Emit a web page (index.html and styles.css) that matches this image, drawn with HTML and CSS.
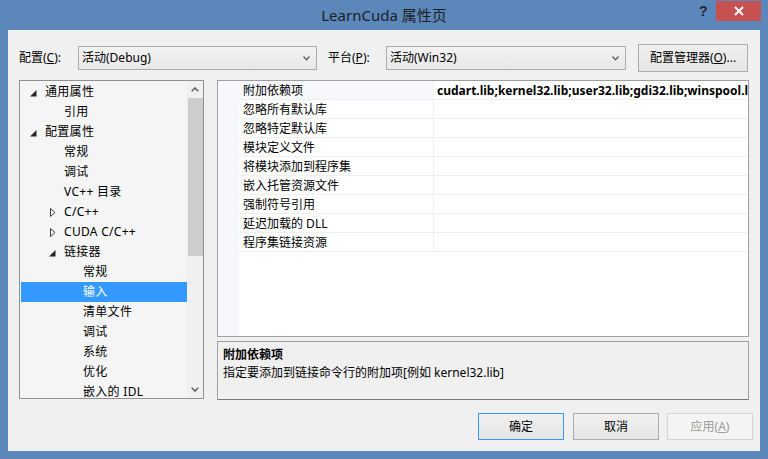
FILE: index.html
```html
<!DOCTYPE html>
<html lang="zh-CN">
<head>
<meta charset="utf-8">
<title>LearnCuda 属性页</title>
<link rel="stylesheet" href="styles.css">
</head>
<body>
<div class="window">
  <div class="titlebar">
    <div class="title">LearnCuda 属性页</div>
    <span class="help">?</span>
    <span class="close"><svg width="10" height="10" viewBox="0 0 10 10"><path d="M1 1 L9 9 M9 1 L1 9" stroke="#fff" stroke-width="2" fill="none"/></svg></span>
  </div>
  <div class="client">
    <div class="toolbar">
      <span class="lbl lbl-config">配置(<u>C</u>):</span>
      <div class="combo combo-config"><span class="combo-text">活动(Debug)</span><span class="combo-arrow"><svg width="7" height="5" viewBox="0 0 7 5"><path d="M0.5 0.5 L3.5 3.8 L6.5 0.5" fill="none" stroke="#606060" stroke-width="1.4"/></svg></span></div>
      <span class="lbl lbl-platform">平台(<u>P</u>):</span>
      <div class="combo combo-platform"><span class="combo-text">活动(Win32)</span><span class="combo-arrow"><svg width="7" height="5" viewBox="0 0 7 5"><path d="M0.5 0.5 L3.5 3.8 L6.5 0.5" fill="none" stroke="#606060" stroke-width="1.4"/></svg></span></div>
      <button class="btn btn-manager">配置管理器(<u>O</u>)...</button>
    </div>

    <div class="main">
      <div class="tree">
        <div class="tree-list">
          <div class="node l0"><span class="tog"><svg class="exp" width="7" height="7" viewBox="0 0 7 7"><path d="M6.5 0 L6.5 6.5 L0 6.5 Z" fill="#262626"/></svg></span><span class="txt">通用属性</span></div>
          <div class="node l1"><span class="tog"></span><span class="txt">引用</span></div>
          <div class="node l0"><span class="tog"><svg class="exp" width="7" height="7" viewBox="0 0 7 7"><path d="M6.5 0 L6.5 6.5 L0 6.5 Z" fill="#262626"/></svg></span><span class="txt">配置属性</span></div>
          <div class="node l1"><span class="tog"></span><span class="txt">常规</span></div>
          <div class="node l1"><span class="tog"></span><span class="txt">调试</span></div>
          <div class="node l1"><span class="tog"></span><span class="txt">VC++ 目录</span></div>
          <div class="node l1"><span class="tog"><svg class="col" width="6" height="9" viewBox="0 0 6 9"><path d="M0.5 0.5 L5 4.5 L0.5 8.5 Z" fill="none" stroke="#404040"/></svg></span><span class="txt">C/C++</span></div>
          <div class="node l1"><span class="tog"><svg class="col" width="6" height="9" viewBox="0 0 6 9"><path d="M0.5 0.5 L5 4.5 L0.5 8.5 Z" fill="none" stroke="#404040"/></svg></span><span class="txt">CUDA C/C++</span></div>
          <div class="node l1"><span class="tog"><svg class="exp" width="7" height="7" viewBox="0 0 7 7"><path d="M6.5 0 L6.5 6.5 L0 6.5 Z" fill="#262626"/></svg></span><span class="txt">链接器</span></div>
          <div class="node l2"><span class="tog"></span><span class="txt">常规</span></div>
          <div class="node l2 selected"><span class="tog"></span><span class="txt">输入</span></div>
          <div class="node l2"><span class="tog"></span><span class="txt">清单文件</span></div>
          <div class="node l2"><span class="tog"></span><span class="txt">调试</span></div>
          <div class="node l2"><span class="tog"></span><span class="txt">系统</span></div>
          <div class="node l2"><span class="tog"></span><span class="txt">优化</span></div>
          <div class="node l2"><span class="tog"></span><span class="txt">嵌入的 IDL</span></div>
        </div>
        <div class="vscroll">
          <div class="sb-arrow"><svg width="8" height="5" viewBox="0 0 8 5"><path d="M0.7 4.3 L4 1 L7.3 4.3" fill="none" stroke="#606060" stroke-width="1.6"/></svg></div>
          <div class="sb-track"><div class="sb-thumb"></div></div>
          <div class="sb-arrow"><svg width="8" height="5" viewBox="0 0 8 5"><path d="M0.7 0.7 L4 4 L7.3 0.7" fill="none" stroke="#606060" stroke-width="1.6"/></svg></div>
        </div>
      </div>

      <div class="right">
        <div class="grid">
          <div class="margin-col"></div>
          <div class="rows">
            <div class="prow first"><div class="pname">附加依赖项</div><div class="pval">cudart.lib;kernel32.lib;user32.lib;gdi32.lib;winspool.lib;comdlg32.lib;advapi32.lib</div></div>
            <div class="prow"><div class="pname">忽略所有默认库</div><div class="pval"></div></div>
            <div class="prow"><div class="pname">忽略特定默认库</div><div class="pval"></div></div>
            <div class="prow"><div class="pname">模块定义文件</div><div class="pval"></div></div>
            <div class="prow"><div class="pname">将模块添加到程序集</div><div class="pval"></div></div>
            <div class="prow"><div class="pname">嵌入托管资源文件</div><div class="pval"></div></div>
            <div class="prow"><div class="pname">强制符号引用</div><div class="pval"></div></div>
            <div class="prow"><div class="pname">延迟加载的 DLL</div><div class="pval"></div></div>
            <div class="prow"><div class="pname">程序集链接资源</div><div class="pval"></div></div>
          </div>
        </div>
        <div class="desc">
          <div class="desc-title">附加依赖项</div>
          <div class="desc-text">指定要添加到链接命令行的附加项[例如 kernel32.lib]</div>
        </div>
      </div>
    </div>

    <div class="footer">
      <button class="btn btn-ok">确定</button>
      <button class="btn btn-cancel">取消</button>
      <button class="btn btn-apply" disabled>应用(<u>A</u>)</button>
    </div>
  </div>
</div>
</body>
</html>
```

FILE: styles.css
```css
* { box-sizing: border-box; }

html, body {
  margin: 0;
  padding: 0;
}

body {
  width: 768px;
  height: 459px;
  overflow: hidden;
  background: #5b87bb;
  font-family: "Segoe UI", "Noto Sans", "Noto Sans CJK SC", sans-serif;
  font-size: 12px;
  color: #000;
}

.window {
  width: 768px;
  height: 459px;
  display: flex;
  flex-direction: column;
  padding: 0 8px 8px;
  background: #5b87bb;
}

/* ---------- title bar ---------- */
.titlebar {
  height: 30px;
  margin: 0 -8px;
  position: relative;
  display: flex;
  align-items: center;
  justify-content: center;
}

.title {
  font-size: 15px;
  color: #1e1e1e;
  line-height: 20px;
  margin-top: -1px;
}

.help {
  position: absolute;
  left: 699px;
  top: 3px;
  font-family: "Liberation Sans", sans-serif;
  font-weight: bold;
  font-size: 14px;
  line-height: 16px;
  color: #262626;
}

.close {
  position: absolute;
  left: 716px;
  top: 1px;
  width: 45px;
  height: 20px;
  background: #c75050;
  display: flex;
  align-items: center;
  justify-content: center;
}

/* ---------- client ---------- */
.client {
  flex: 1;
  background: #f0f0f0;
  display: flex;
  flex-direction: column;
  padding: 14px 11px 11px;
}

u { text-decoration: underline; text-underline-offset: 1px; }

.toolbar {
  height: 28px;
  display: flex;
  align-items: center;
}

.lbl {
  line-height: 16px;
  white-space: nowrap;
}

.lbl-config { width: 59px; }
.lbl-platform { width: 58px; margin-left: 11px; }

.combo {
  height: 24px;
  border: 1px solid #acacac;
  background: linear-gradient(#f2f2f2, #e8e8e8);
  display: flex;
  align-items: center;
  padding-left: 3px;
}

.combo-config { width: 239px; }
.combo-platform { width: 240px; }

.combo-text {
  flex: 1;
  line-height: 16px;
}

.combo-arrow {
  width: 17px;
  display: flex;
  justify-content: center;
  align-items: center;
  padding-right: 2px;
}

.btn {
  font-family: inherit;
  font-size: 12px;
  color: #000;
  border: 1px solid #acacac;
  background: linear-gradient(#f0f0f0, #e5e5e5);
  padding: 0;
  line-height: 16px;
}

.btn-manager {
  width: 110px;
  height: 28px;
  margin-left: 12px;
}

/* ---------- main ---------- */
.main {
  margin-top: 8px;
  height: 320px;
  display: flex;
  gap: 13px;
}

.tree {
  width: 185px;
  height: 319px;
  border: 1px solid #8e9196;
  background: #f5f5f5;
  display: flex;
  overflow: hidden;
}

.tree-list {
  width: 167px;
  padding-top: 1px;
  overflow: hidden;
}

.node {
  height: 20px;
  display: flex;
  align-items: center;
  white-space: nowrap;
  margin-left: 1px;
}

.node.l0 { padding-left: 9px; }
.node.l1 { padding-left: 28px; }
.node.l2 { padding-left: 47px; }

.tog {
  width: 15px;
  height: 20px;
  display: flex;
  align-items: center;
}

.tog .exp { margin-top: 2px; }
.tog .col { margin-left: 1px; }

.txt {
  line-height: 20px;
  letter-spacing: 0.3px;
}

.node.selected {
  background: #3399ff;
  color: #fff;
}

.vscroll {
  width: 16px;
  display: flex;
  flex-direction: column;
  background: #f0f0f0;
}

.sb-arrow {
  height: 17px;
  display: flex;
  align-items: center;
  justify-content: center;
}

.sb-track {
  flex: 1;
}

.sb-thumb {
  height: 158px;
  margin-left: 1px;
  background: #cdcdcd;
}

/* ---------- property grid ---------- */
.right {
  width: 532px;
  display: flex;
  flex-direction: column;
  gap: 4px;
}

.grid {
  height: 257px;
  border: 1px solid #a0a0a0;
  background: #fff;
  display: flex;
  overflow: hidden;
}

.margin-col {
  width: 21px;
  background: #f6f8fb;
}

.rows {
  flex: 1;
  overflow: hidden;
}

.prow {
  height: 19px;
  display: flex;
  border-bottom: 1px solid #f0f0f0;
}

.pname {
  width: 195px;
  border-right: 1px solid #f0f0f0;
  padding: 2px 0 0 4px;
  line-height: 16px;
  white-space: nowrap;
}

.prow.first .pname { background: #f6f8fb; }

.pval {
  flex: 1;
  padding: 2px 0 0 3px;
  line-height: 16px;
  font-weight: bold;
  white-space: nowrap;
  overflow: hidden;
}

.desc {
  height: 59px;
  border: 1px solid #a0a0a0;
  border-bottom-color: #7a7a7a;
  background: #f0f0f0;
  padding: 4px 5px 0;
}

.desc-title {
  font-weight: bold;
  line-height: 18px;
}

.desc-text {
  line-height: 18px;
}

/* ---------- footer ---------- */
.footer {
  margin-top: 13px;
  display: flex;
  justify-content: flex-end;
  gap: 8px;
  margin-right: -4px;
}

.footer .btn {
  width: 86px;
  height: 27px;
}

.btn-ok {
  border-color: #3399ff;
  margin-right: 1px;
}

.btn-apply {
  border-color: #d5d5d5;
  background: #f4f4f4;
  color: #9a9a9a;
}
```
